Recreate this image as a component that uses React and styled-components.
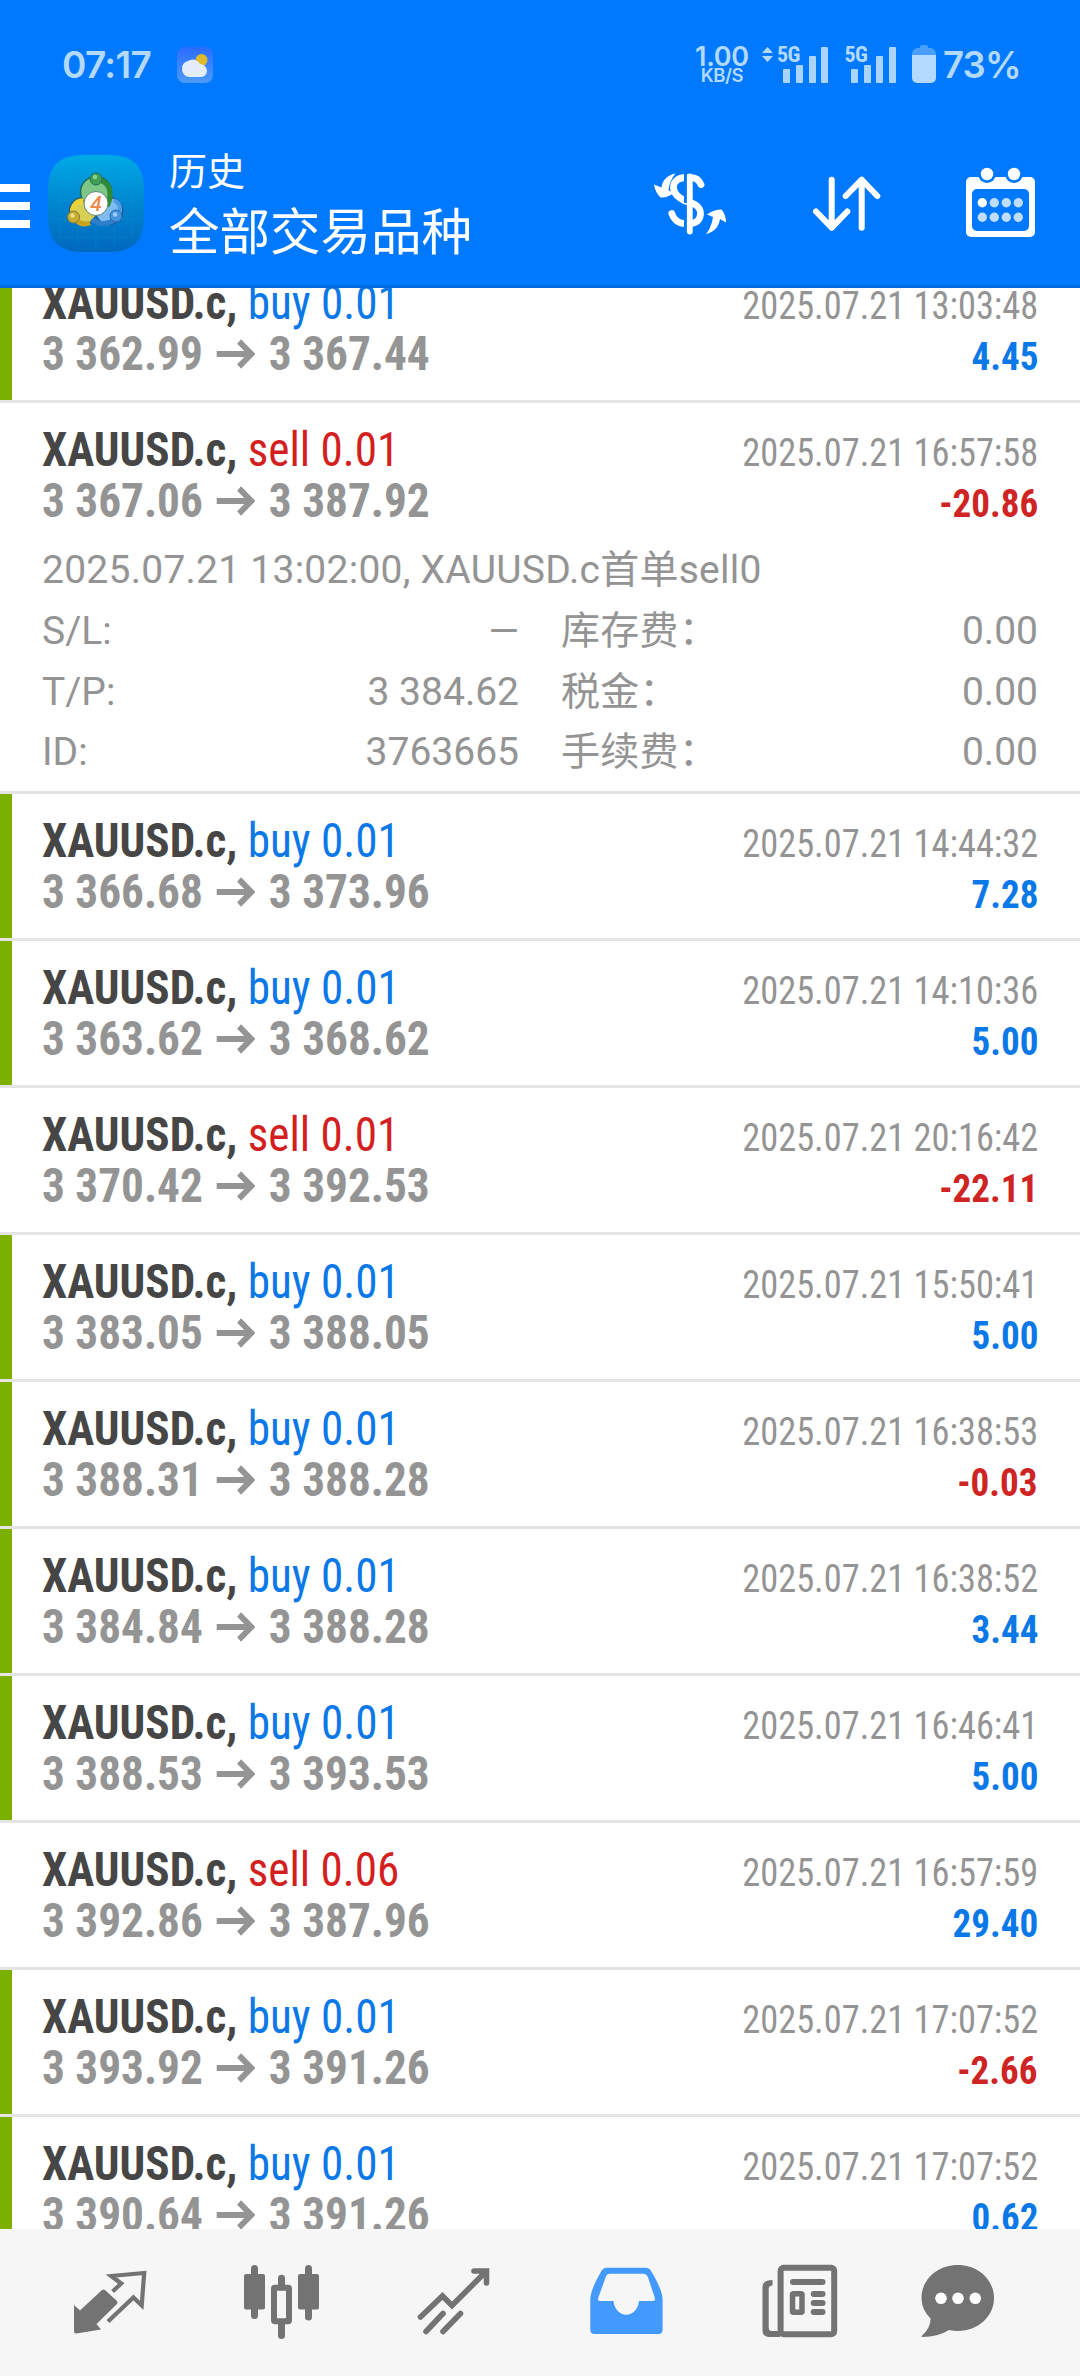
import React from 'react';
import styled, { createGlobalStyle } from 'styled-components';

const trades = [
    { side: 'buy', volume: '0.01', open: '3 362.99', close: '3 367.44', time: '2025.07.21 13:03:48', profit: '4.45', marked: true },
    {
        side: 'sell',
        volume: '0.01',
        open: '3 367.06',
        close: '3 387.92',
        time: '2025.07.21 16:57:58',
        profit: '-20.86',
        details: {
            comment: '2025.07.21 13:02:00, XAUUSD.c首单sell0',
            rows: [
                ['S/L:', '—', '库存费：', '0.00'],
                ['T/P:', '3 384.62', '税金：', '0.00'],
                ['ID:', '3763665', '手续费：', '0.00'],
            ],
        },
    },
    { side: 'buy', volume: '0.01', open: '3 366.68', close: '3 373.96', time: '2025.07.21 14:44:32', profit: '7.28', marked: true },
    { side: 'buy', volume: '0.01', open: '3 363.62', close: '3 368.62', time: '2025.07.21 14:10:36', profit: '5.00', marked: true },
    { side: 'sell', volume: '0.01', open: '3 370.42', close: '3 392.53', time: '2025.07.21 20:16:42', profit: '-22.11' },
    { side: 'buy', volume: '0.01', open: '3 383.05', close: '3 388.05', time: '2025.07.21 15:50:41', profit: '5.00', marked: true },
    { side: 'buy', volume: '0.01', open: '3 388.31', close: '3 388.28', time: '2025.07.21 16:38:53', profit: '-0.03', marked: true },
    { side: 'buy', volume: '0.01', open: '3 384.84', close: '3 388.28', time: '2025.07.21 16:38:52', profit: '3.44', marked: true },
    { side: 'buy', volume: '0.01', open: '3 388.53', close: '3 393.53', time: '2025.07.21 16:46:41', profit: '5.00', marked: true },
    { side: 'sell', volume: '0.06', open: '3 392.86', close: '3 387.96', time: '2025.07.21 16:57:59', profit: '29.40' },
    { side: 'buy', volume: '0.01', open: '3 393.92', close: '3 391.26', time: '2025.07.21 17:07:52', profit: '-2.66', marked: true },
    { side: 'buy', volume: '0.01', open: '3 390.64', close: '3 391.26', time: '2025.07.21 17:07:52', profit: '0.62', marked: true },
];

const Signal = ({ arrows }) => (
    <SignalBox>
        {arrows && (
            <svg width="11" height="15" viewBox="0 0 11 15" fill="currentColor">
                <path d="M5.5 0L11 6H0zM5.5 15L0 9h11z" />
            </svg>
        )}
        <Network $spaced={arrows}>5G</Network>
        <Bars>
            <Bar $h={14} />
            <Bar $h={18} />
            <Bar $h={27} />
            <Bar $h={36} />
        </Bars>
    </SignalBox>
);

const WeatherIcon = () => (
    <svg width="36" height="36" viewBox="0 0 36 36">
        <defs>
            <linearGradient id="sky" x1="0" y1="0" x2="0" y2="1">
                <stop offset="0" stopColor="#2a6cff" />
                <stop offset="1" stopColor="#4c9bf8" />
            </linearGradient>
        </defs>
        <rect width="36" height="36" rx="8" fill="url(#sky)" />
        <circle cx="24.500" cy="13" r="6" fill="#dfba2c" />
        <path d="M12 30a7.5 8 0 0 1-7-8 7.500 7.500 0 0 1 6-8 8 8 0 0 1 12 3 7 7 0 0 1 7 7 6 6 0 0 1-6 6z" fill="#e3edfb" />
    </svg>
);

const BatteryIcon = () => (
    <svg width="24" height="38" viewBox="0 0 24 38">
        <path d="M8 2a2 2 0 0 1 2-2h4a2 2 0 0 1 2 2v1h3q5 1 5 7H0q0-6 5-7h3z" fill="#4a9eff" />
        <path d="M0 10h24v23a5 5 0 0 1-5 5H5a5 5 0 0 1-5-5z" fill="#b3d9ff" />
    </svg>
);

const AppLogo = () => (
    <svg width="96" height="97" viewBox="0 0 96 97">
        <defs>
            <linearGradient id="tile" x1="0" y1="0" x2="0" y2="1">
                <stop offset="0" stopColor="#00a9e6" />
                <stop offset="0.5" stopColor="#0086d0" />
                <stop offset="1" stopColor="#0068bd" />
            </linearGradient>
        </defs>
        <path d="M0 34Q0 0 34 0h28q34 0 34 34v29q0 34-34 34H34Q0 97 0 63z" fill="url(#tile)" />
        <path d="M12 18v62M30 8v82M48 4v90M66 8v82M84 18v62M8 28h80M4 46h88M4 64h88M12 82h72" stroke="#1597dc" strokeWidth="1" opacity="0.3" />
        <circle cx="35" cy="56" r="13.500" fill="#d8cf55" stroke="#35606a" strokeWidth="1.500" />
        <circle cx="61" cy="56" r="13.500" fill="#7fbdf0" stroke="#1e5c94" strokeWidth="1.500" />
        <circle cx="48" cy="37" r="15.500" fill="#7cc688" stroke="#1d6b56" strokeWidth="1.500" />
        {/* darker bands that sweep round each lobe */}
        <path d="M48 25q14 0 14 15 0 6-3 11" fill="none" stroke="#2f8a35" strokeWidth="5" />
        <path d="M24.500 56q2-10 11-10" fill="none" stroke="#ecd437" strokeWidth="5" />
        <path d="M27 64q6 7 15 4" fill="none" stroke="#c9a51f" strokeWidth="5" />
        <path d="M44 64q10 9 22 1" fill="none" stroke="#2d7ecb" strokeWidth="5" />
        <path d="M66 45q7 4 6 11" fill="none" stroke="#4b9ce4" strokeWidth="4" />
        <circle cx="48" cy="24" r="6" fill="#3f9f55" stroke="#23704a" />
        <circle cx="47" cy="22" r="2.200" fill="#8ed29a" />
        <circle cx="25.500" cy="62" r="6" fill="#c9ac2e" stroke="#7d7c3a" />
        <circle cx="24.500" cy="60.500" r="2.200" fill="#eadf8a" />
        <circle cx="68" cy="61" r="6" fill="#4794de" stroke="#2468ac" />
        <circle cx="67" cy="59.500" r="2.200" fill="#9dcdf7" />
        <circle cx="48" cy="48.500" r="12" fill="#fff" stroke="#5f8577" />
        <text x="48" y="56" textAnchor="middle" fontFamily="Roboto, sans-serif" fontStyle="italic" fontWeight="500" fontSize="21" fill="#ee8a50">4</text>
    </svg>
);

const DollarIcon = () => (
    <svg width="74" height="72" viewBox="0 0 74 72" fill="none" stroke="#fff">
        <path d="M47 15.500C45 10.500 40.500 8.200 35.500 8.600M32 8.500C25 8.500 19.500 12 19.500 18.500C19.500 25 24.500 28.500 31 32C39 34 46.500 36.500 46.500 44.500C46.500 51 42 54.500 36 54.500M31 54.500C24 54.500 19.500 50 17.800 44.500" strokeWidth="6.800" strokeLinecap="round" transform="translate(0 2)" />
        <path d="M31.500 6V36M31.500 48V68" stroke="#0079ff" strokeWidth="3" />
        <path d="M35.800 9.500V64.500" strokeWidth="5.800" strokeLinecap="round" />
        <path d="M21.500 6.500C13 8.500 8.500 13 7.500 20.500L0 17.500Q1 25 6.500 30.500Q14 31 20 25.500L14.500 23.500C15 17 17.500 11.500 21.500 6.500z" fill="#fff" stroke="none" />
        <path d="M52 67C60 65.500 65 59.500 66 52L72 55.500Q72 47.500 67.500 42.500Q60 42.500 53 47.500L59 50C58 56.500 56 62 52 67z" fill="#fff" stroke="none" />
    </svg>
);

const SortIcon = () => (
    <svg width="74" height="72" viewBox="0 0 74 72" fill="none" stroke="#fff" strokeWidth="6" strokeLinecap="round" strokeLinejoin="round">
        <path d="M21.700 12.700v48M6 44.500l15.700 16.200L37.300 44.500" />
        <path d="M51.700 60.700v-48M35.700 29l16-16.300L67.300 29" />
    </svg>
);

const CalendarIcon = () => (
    <svg width="70" height="72" viewBox="0 0 70 72">
        <rect x="0" y="10" width="69" height="60" rx="5" fill="#fff" />
        <circle cx="21" cy="7" r="9" fill="#0079ff" />
        <circle cx="48" cy="7" r="9" fill="#0079ff" />
        <circle cx="21" cy="7" r="6.200" fill="#fff" />
        <circle cx="48" cy="7" r="6.200" fill="#fff" />
        <rect x="6" y="22" width="57" height="42" rx="5" fill="#0079ff" />
        <circle cx="16.300" cy="35.700" r="4.700" fill="#fff" />
        {[28.3, 40.3, 52.3].map((x) => (
            <circle key={x} cx={x} cy="35.700" r="4.700" fill="#bfdeff" />
        ))}
        {[16.3, 28.3, 40.3, 52.3].map((x) => (
            <circle key={x} cx={x} cy="50.300" r="4.700" fill="#bfdeff" />
        ))}
    </svg>
);

const ArrowRight = () => (
    <svg width="41" height="30" viewBox="0 0 41 30" fill="none" stroke="currentColor" strokeWidth="6">
        <path d="M0 15h36M24 2.500L37 15 24 27.500" />
    </svg>
);

const QuotesIcon = () => (
    <NavSvg viewBox="-2 0 80 80">
        <path d="M2 43l6 5.500 22-20.500q1.500-1 3 0L45 39q1 1.500 0 3L24.500 62l4.500 5.500-24.500 4Q2 72 2 69z" fill="currentColor" />
        <path d="M40.600 29.500l8.600-8-10-7.500 33-3-2.500 32.500-8.300-8L36 59.500" fill="none" stroke="currentColor" strokeWidth="4.200" />
    </NavSvg>
);

const ChartIcon = () => (
    <NavSvg viewBox="-2 0 80 80">
        <g fill="currentColor">
            <rect x="0" y="12" width="21" height="35.500" rx="2" />
            <rect x="7" y="3" width="7" height="54" rx="3.500" />
            <rect x="34" y="12.700" width="7" height="14" rx="3.500" />
            <rect x="34" y="58" width="7" height="19" rx="3.500" />
            <rect x="54" y="12" width="21" height="35.500" rx="2" />
            <rect x="61" y="3" width="7" height="55.500" rx="3.500" />
        </g>
        <rect x="30" y="25.700" width="15" height="33.500" rx="1" fill="none" stroke="currentColor" strokeWidth="6" />
    </NavSvg>
);

const TradeIcon = () => (
    <NavSvg viewBox="-2 0 80 80">
        <path d="M4.500 55L26.500 34l9.500 9.500L69 10.500M10 69.500l17-18M27 69.500l17.500-18M58 9h12.500v12" fill="none" stroke="currentColor" strokeWidth="5.600" strokeLinecap="round" />
    </NavSvg>
);

const HistoryIcon = () => (
    <NavSvg viewBox="-2 0 80 80">
        <path
            fillRule="evenodd"
            fill="currentColor"
            d="M18.500 5.700H58q3.500 0 5.500 4Q74.600 28 74.600 38v29.500q0 4.500-4 4.500H6.500q-4.200 0-4.200-4.500V38Q2.300 28 13 9.700q2-4 5.500-4zM21.500 11.700q-2.500 0-3.500 2.500L10 36.500Q9.500 39 12 39h13.500a12.800 15 0 0 0 25.500 0h14q2.500 0 2-2.500L60 15.200q-1.500-3.500-4.500-3.500z"
        />
    </NavSvg>
);

const NewsIcon = () => (
    <NavSvg viewBox="-2 0 80 80">
        <rect x="20.600" y="5.700" width="53.600" height="66.500" rx="3" fill="none" stroke="currentColor" strokeWidth="6" />
        <path d="M12.500 18v5.500q-3.800 0-3.800 3V66q0 3 3 3H20v6H9q-6.500 0-6.500-6.500V25q0-7 10-7z" fill="currentColor" />
        <path d="M33 20h29.500M53.700 32h8.800M53.700 41h8.800M53.700 50h8.800" stroke="currentColor" strokeWidth="6" strokeLinecap="round" />
        <rect x="32.500" y="31.700" width="9.500" height="18.600" rx="1" fill="none" stroke="currentColor" strokeWidth="5.500" />
    </NavSvg>
);

const ChatIcon = () => (
    <NavSvg viewBox="-2 0 80 80">
        <path d="M37.800 3C58 3 74 17.500 74 36S58 69 37.800 69Q33 69 29 68 18 75 2.500 75q-2 0 0-1.800Q11 65 10.500 56.500 1.500 47.500 1.500 36C1.500 17.500 17.500 3 37.800 3z" fill="currentColor" />
        <circle cx="21" cy="36.300" r="5.800" fill="#fff" />
        <circle cx="38" cy="36.300" r="5.800" fill="#fff" />
        <circle cx="55.300" cy="36.300" r="5.800" fill="#fff" />
    </NavSvg>
);

const Trade = ({ trade }) => (
    <TradeItem $marked={trade.marked}>
        <Line $h={51}>
            <Symbol>
                XAUUSD.c, <Side $side={trade.side}>{trade.side} {trade.volume}</Side>
            </Symbol>
            <Time>{trade.time}</Time>
        </Line>
        <Line $h={50}>
            <Prices>
                {trade.open}
                <ArrowRight />
                {trade.close}
            </Prices>
            <Profit $loss={trade.profit.startsWith('-')}>{trade.profit}</Profit>
        </Line>
        {trade.details && (
            <Details>
                <Comment>{trade.details.comment}</Comment>
                {trade.details.rows.map(([label, value, costLabel, cost]) => (
                    <DetailRow key={label}>
                        <span>{label}</span>
                        <Value>{value}</Value>
                        <CostLabel>{costLabel}</CostLabel>
                        <Value>{cost}</Value>
                    </DetailRow>
                ))}
            </Details>
        )}
    </TradeItem>
);

const App = () => {
    return (
        <Screen>
            <GlobalStyle />
            <Header>
                <StatusBar>
                    <Clock>07:17</Clock>
                    <WeatherIcon />
                    <StatusRight>
                        <Speed>
                            <SpeedValue>1.00</SpeedValue>
                            <SpeedUnit>KB/S</SpeedUnit>
                        </Speed>
                        <Signal arrows />
                        <Signal />
                        <BatteryIcon />
                        <Percent>73%</Percent>
                    </StatusRight>
                </StatusBar>
                <Toolbar>
                    <MenuButton>
                        <MenuBar />
                        <MenuBar />
                        <MenuBar />
                    </MenuButton>
                    <AppLogo />
                    <Titles>
                        <Caption>历史</Caption>
                        <Title>全部交易品种</Title>
                    </Titles>
                    <Actions>
                        <DollarIcon />
                        <SortIcon />
                        <CalendarIcon />
                    </Actions>
                </Toolbar>
            </Header>
            <List>
                {trades.map((trade, i) => (
                    <Trade key={i} trade={trade} />
                ))}
            </List>
            <BottomNav>
                <NavItem><QuotesIcon /></NavItem>
                <NavItem><ChartIcon /></NavItem>
                <NavItem><TradeIcon /></NavItem>
                <NavItem $active><HistoryIcon /></NavItem>
                <NavItem><NewsIcon /></NavItem>
                <NavItem><ChatIcon /></NavItem>
            </BottomNav>
        </Screen>
    );
};
export default App;

const GlobalStyle = createGlobalStyle`
    body {
        margin: 0;
        background: #fff;
    }
    svg {
        display: block;
        flex-shrink: 0;
    }
`;
const Screen = styled.div`
    display: flex;
    flex-direction: column;
    width: 1080px;
    height: 2376px;
    overflow: hidden;
    background: #fff;
    font-family: Roboto, 'Noto Sans CJK SC', sans-serif;
`;
const Header = styled.header`
    height: 285px;
    flex-shrink: 0;
    background: #0079ff;
    border-bottom: 3px solid #006ce0;
    color: #fff;
`;
const StatusBar = styled.div`
    display: flex;
    align-items: center;
    height: 128px;
    padding: 1px 62px 0;
    box-sizing: border-box;
    color: #b3d9ff;
    font-family: Inter, sans-serif;
`;
const Clock = styled.span`
    width: 115px;
    font-size: 37px;
    font-weight: 600;
    letter-spacing: -0.7px;
`;
const StatusRight = styled.div`
    display: flex;
    align-items: flex-end;
    height: 38px;
    margin: -2px 0 0 auto;
`;
const Speed = styled.div`
    display: flex;
    flex-direction: column;
    align-items: center;
    width: 56px;
    margin-right: 12px;
`;
const SpeedValue = styled.span`
    font-size: 27px;
    font-weight: 600;
    line-height: 21px;
    letter-spacing: -0.3px;
`;
const SpeedUnit = styled.span`
    font-size: 18.500px;
    font-weight: 600;
    line-height: 16px;
    letter-spacing: -0.5px;
`;
const SignalBox = styled.div`
    display: flex;
    align-items: flex-start;
    height: 38px;
    margin-right: 16px;
    padding-top: 2px;
    box-sizing: border-box;
`;
const Network = styled.span`
    width: 24px;
    margin: -1px -17.5px 0 ${({ $spaced }) => ($spaced ? '4px' : '0')};
    font-family: Roboto, sans-serif;
    font-size: 22px;
    font-weight: 700;
    font-stretch: 85%;
    line-height: 18px;
    letter-spacing: -0.5px;
`;
const Bars = styled.div`
    display: flex;
    align-items: flex-end;
    gap: 5.700px;
    height: 36px;
`;
const Bar = styled.i`
    width: 7px;
    height: ${({ $h }) => $h}px;
    border-radius: 1px;
    background: #a9d4ff;
`;
const Percent = styled.span`
    width: 76px;
    margin-left: 7px;
    margin-right: -1px;
    font-size: 36.5px;
    font-weight: 600;
    line-height: 36px;
    letter-spacing: -0.8px;
    white-space: nowrap;
`;
const Toolbar = styled.div`
    display: flex;
    align-items: flex-start;
    height: 157px;
    padding: 27px 44px 0 0;
    box-sizing: border-box;
`;
const MenuButton = styled.div`
    display: flex;
    flex-direction: column;
    gap: 10px;
    width: 30px;
    margin: 29px 18px 0 0;
`;
const MenuBar = styled.i`
    height: 8px;
    background: #fff;
`;
const Titles = styled.div`
    display: flex;
    flex-direction: column;
    margin-left: 25px;
`;
const Caption = styled.span`
    margin-top: -7px;
    font-size: 38px;
    line-height: 48px;
`;
const Title = styled.span`
    margin-top: 2px;
    font-size: 50.5px;
    line-height: 70px;
    white-space: nowrap;
`;
const Actions = styled.div`
    display: flex;
    justify-content: space-between;
    width: 382px;
    margin: 12px 0 0 auto;
`;
const List = styled.main`
    flex: 1;
    min-height: 0;
    overflow: hidden;
    /* the list is scrolled, so its first row starts under the header */
    & > :first-child {
        margin-top: -32px;
    }
`;
const TradeItem = styled.section`
    min-height: 147px;
    padding: 19px 42px 0;
    border-bottom: 3px solid #e4e4e4;
    box-sizing: border-box;
    background: ${({ $marked }) => ($marked ? 'linear-gradient(90deg, #7cb000 12px, #fff 12px)' : '#fff')} padding-box;
`;
const Line = styled.div`
    display: flex;
    justify-content: space-between;
    align-items: baseline;
    height: ${({ $h }) => $h}px;
    line-height: 56px;
    white-space: nowrap;
    font-stretch: 75%;
`;
const Symbol = styled.span`
    font-size: 48px;
    font-weight: 700;
    color: #464646;
    transform: scaleX(0.94);
    transform-origin: left;
`;
const Side = styled.span`
    font-weight: 400;
    color: ${({ $side }) => ($side === 'buy' ? '#0b78e8' : '#d31f1f')};
`;
const Time = styled.span`
    font-size: 39px;
    color: #949494;
    transform: scaleX(0.933);
    transform-origin: right;
`;
const Prices = styled.span`
    display: inline-flex;
    align-items: center;
    gap: 14.5px;
    font-size: 48px;
    font-weight: 700;
    color: #949494;
    transform: scaleX(0.943);
    transform-origin: left;
`;
const Profit = styled.span`
    font-size: 39px;
    font-weight: 700;
    color: ${({ $loss }) => ($loss ? '#cf2424' : '#0b78e8')};
    transform: scaleX(0.95);
    transform-origin: right;
`;
const Details = styled.div`
    padding: 17px 0 8.5px;
    font-size: 39px;
    color: #949494;
    white-space: nowrap;
`;
const Comment = styled.div`
    height: 61px;
    line-height: 61px;
    letter-spacing: 0.25px;
`;
const DetailRow = styled.div`
    display: grid;
    grid-template-columns: 200px 277px 242px 1fr;
    height: 60.5px;
    line-height: 60.5px;
`;
const Value = styled.span`
    text-align: right;
`;
const CostLabel = styled.span`
    padding-left: 42px;
    letter-spacing: 0.3px;
`;
const BottomNav = styled.nav`
    display: grid;
    grid-template-columns: repeat(5, 172px) 148px;
    height: 147px;
    padding: 33px 48px 0 24px;
    flex-shrink: 0;
    box-sizing: border-box;
    background: #f6f6f6;
`;
const NavItem = styled.a`
    display: flex;
    justify-content: center;
    color: ${({ $active }) => ($active ? '#4399fc' : '#737373')};
`;
const NavSvg = styled.svg`
    width: 80px;
    height: 80px;
`;
